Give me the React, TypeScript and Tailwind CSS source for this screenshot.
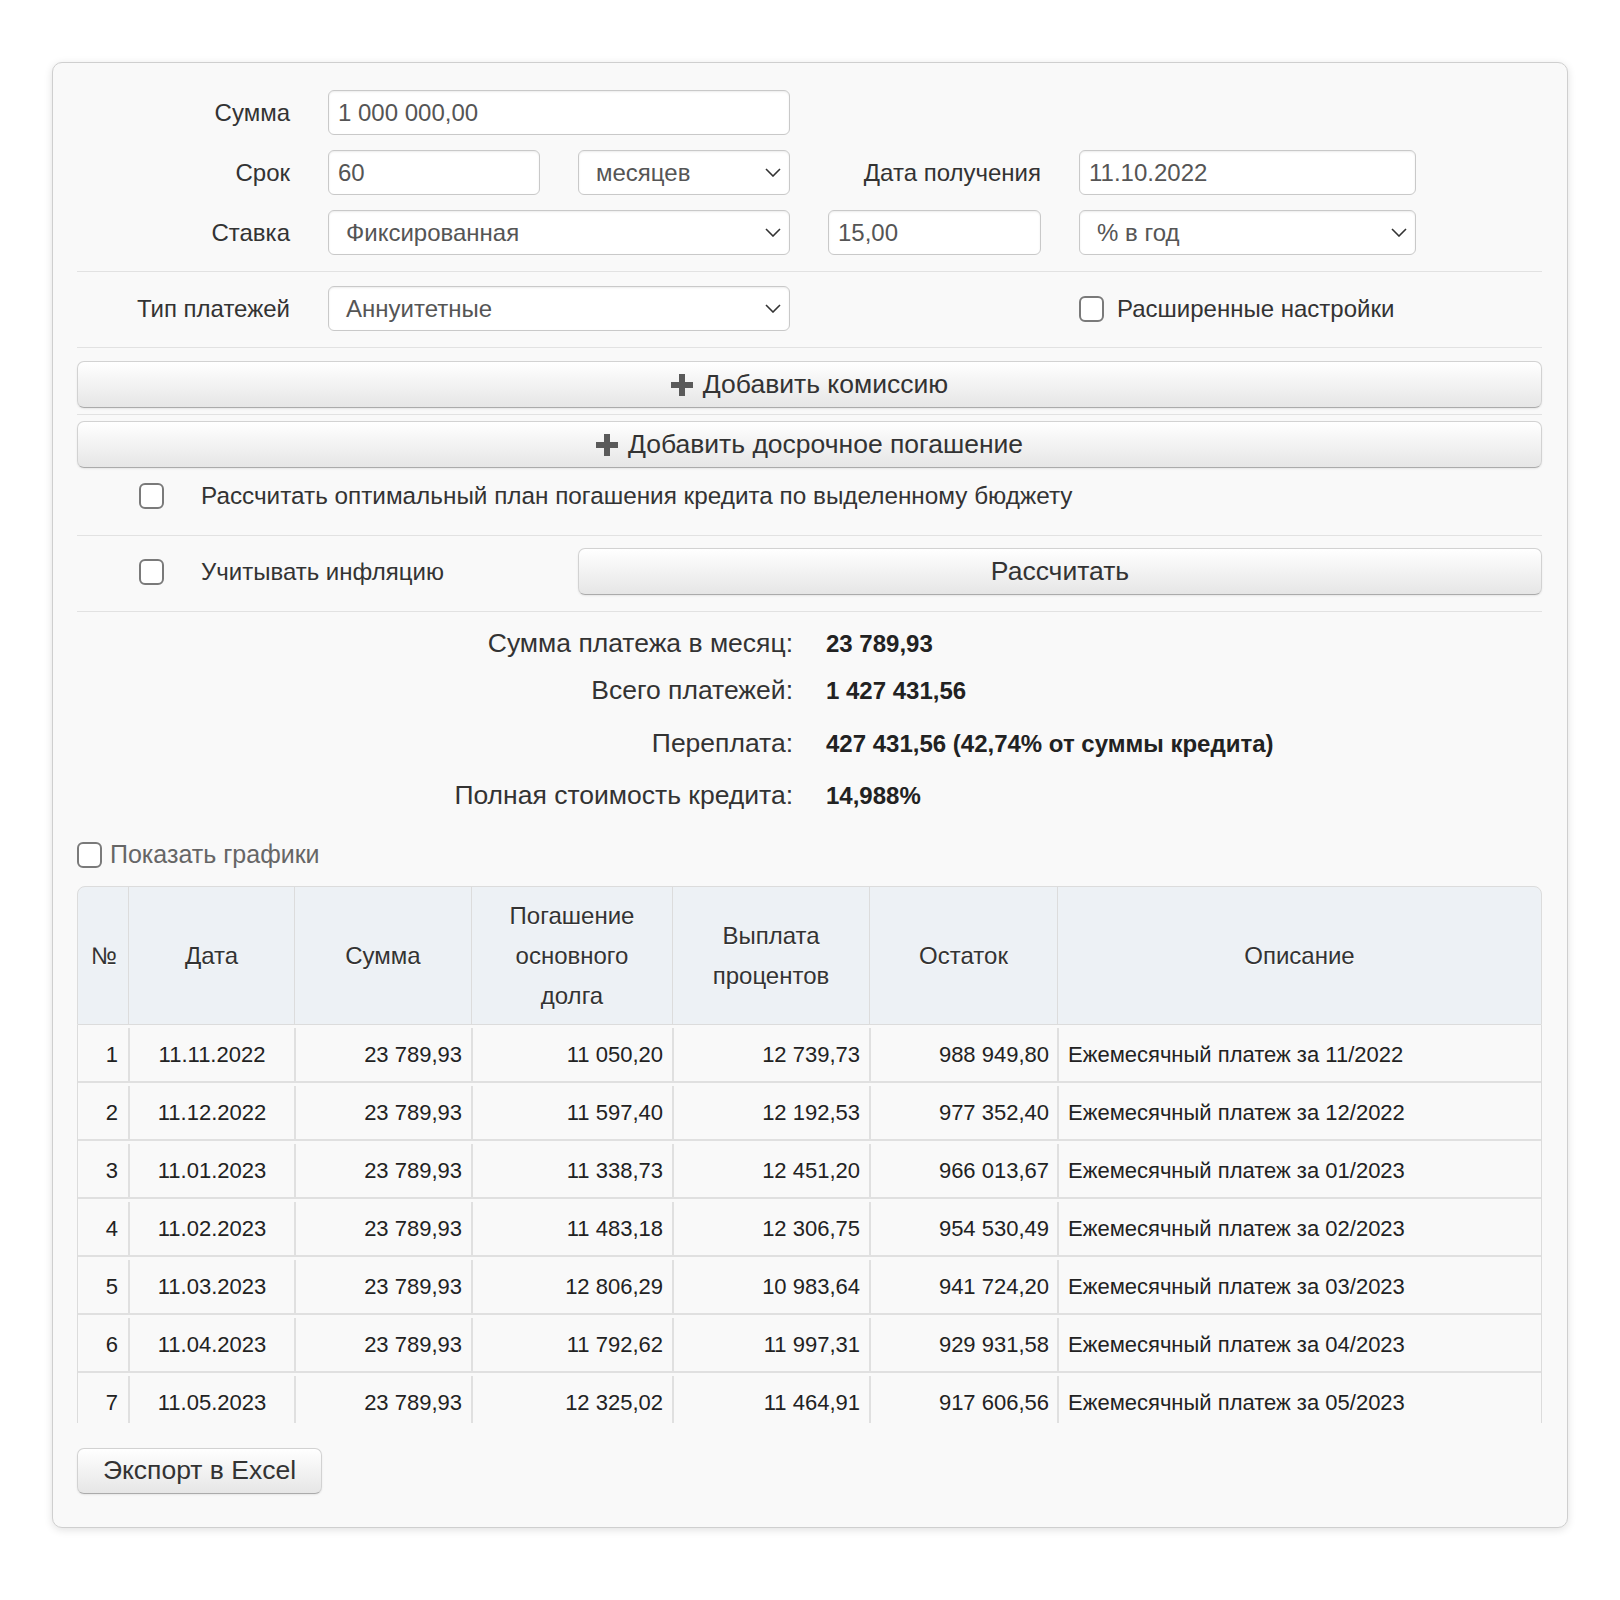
import React from "react";

const rows = [
  ["1", "11.11.2022", "23 789,93", "11 050,20", "12 739,73", "988 949,80", "Ежемесячный платеж за 11/2022"],
  ["2", "11.12.2022", "23 789,93", "11 597,40", "12 192,53", "977 352,40", "Ежемесячный платеж за 12/2022"],
  ["3", "11.01.2023", "23 789,93", "11 338,73", "12 451,20", "966 013,67", "Ежемесячный платеж за 01/2023"],
  ["4", "11.02.2023", "23 789,93", "11 483,18", "12 306,75", "954 530,49", "Ежемесячный платеж за 02/2023"],
  ["5", "11.03.2023", "23 789,93", "12 806,29", "10 983,64", "941 724,20", "Ежемесячный платеж за 03/2023"],
  ["6", "11.04.2023", "23 789,93", "11 792,62", "11 997,31", "929 931,58", "Ежемесячный платеж за 04/2023"],
  ["7", "11.05.2023", "23 789,93", "12 325,02", "11 464,91", "917 606,56", "Ежемесячный платеж за 05/2023"],
];

const cols = "grid grid-cols-[50px_166px_177px_201px_197px_188px_1fr]";

function Chevron() {
  return (
    <svg width="16" height="9" viewBox="0 0 16 9" className="shrink-0">
      <polyline points="1,1 8,8 15,1" fill="none" stroke="#333" strokeWidth="1.6" />
    </svg>
  );
}

function Plus() {
  return (
    <svg width="22" height="22" viewBox="0 0 22 22" className="shrink-0">
      <path d="M8 0h6v8h8v6h-8v8h-6v-8h-8v-6h8z" fill="#5a5a5a" />
    </svg>
  );
}

function Field({ value, className = "" }: { value: string; className?: string }) {
  return (
    <input
      readOnly
      value={value}
      className={`h-[45px] w-full rounded-[6px] border border-[#c9c9c9] bg-white px-[9px] text-[24px] text-[#555] shadow-[inset_0_1px_2px_rgba(0,0,0,0.08)] outline-none ${className}`}
    />
  );
}

function Select({ value, className = "" }: { value: string; className?: string }) {
  return (
    <div
      className={`flex h-[45px] items-center justify-between rounded-[6px] border border-[#c9c9c9] bg-white pl-[17px] pr-[8px] text-[24px] text-[#555] shadow-[inset_0_1px_2px_rgba(0,0,0,0.08)] ${className}`}
    >
      <span>{value}</span>
      <Chevron />
    </div>
  );
}

function Box() {
  return <span className="block h-[26px] w-[25px] shrink-0 rounded-[6px] border-2 border-[#7a7a7a] bg-white" />;
}

function Btn({ children, className = "" }: { children: React.ReactNode; className?: string }) {
  return (
    <div
      className={`flex items-center justify-center gap-[10px] rounded-[7px] border border-[#d2d2d2] border-b-[#ababab] bg-gradient-to-b from-white to-[#e6e6e6] text-[26.5px] text-[#333] shadow-[0_1px_2px_rgba(0,0,0,0.08)] ${className}`}
    >
      {children}
    </div>
  );
}

function Divider({ className = "" }: { className?: string }) {
  return <div className={`h-px bg-[#e2e2e2] ${className}`} />;
}

function Sum({ label, value, className = "" }: { label: string; value: string; className?: string }) {
  return (
    <div className={`grid h-[44px] grid-cols-[716px_1fr] gap-x-[33px] ${className}`}>
      <div className="flex items-center justify-end text-[26.5px]">{label}</div>
      <div className="flex items-center text-[24px] font-bold text-[#222]">{value}</div>
    </div>
  );
}

export default function App() {
  return (
    <div className="min-h-[1600px] bg-white pt-[62px] text-[#333]" style={{ fontFamily: '"Liberation Sans", Arial, sans-serif' }}>
      <div className="ml-[52px] w-[1516px] rounded-[10px] border border-[#cfcfcf] bg-[#f9f9f9] pb-[33px] pl-[24px] pr-[25px] pt-[27px] shadow-[0_2px_8px_rgba(0,0,0,0.12)]">
        {/* основные поля */}
        <div className="grid grid-cols-[213px_212px_212px_213px_337px] gap-x-[38px] gap-y-[15px] text-[24px]">
          <div className="flex h-[45px] items-center justify-end">Сумма</div>
          <Field value="1 000 000,00" className="col-span-2" />
          <div />
          <div />

          <div className="flex h-[45px] items-center justify-end">Срок</div>
          <Field value="60" />
          <Select value="месяцев" />
          <div className="flex h-[45px] items-center justify-end">Дата получения</div>
          <Field value="11.10.2022" />

          <div className="flex h-[45px] items-center justify-end">Ставка</div>
          <Select value="Фиксированная" className="col-span-2" />
          <Field value="15,00" />
          <Select value="% в год" />
        </div>

        <Divider className="mt-[16px]" />

        <div className="mt-[14px] grid grid-cols-[213px_212px_212px_213px_337px] gap-x-[38px] text-[24px]">
          <div className="flex h-[45px] items-center justify-end">Тип платежей</div>
          <Select value="Аннуитетные" className="col-span-2" />
          <div />
          <div className="flex h-[45px] items-center gap-[13px]">
            <Box />
            <span>Расширенные настройки</span>
          </div>
        </div>

        <Divider className="mt-[16px]" />

        <Btn className="mt-[13px] h-[47px]">
          <Plus />
          <span>Добавить комиссию</span>
        </Btn>
        <Divider className="mt-[6px]" />
        <Btn className="mt-[6px] h-[47px]">
          <Plus />
          <span>Добавить досрочное погашение</span>
        </Btn>

        <div className="mt-[15px] flex h-[26px] items-center pl-[62px] text-[24.3px]">
          <Box />
          <span className="ml-[37px]">Рассчитать оптимальный план погашения кредита по выделенному бюджету</span>
        </div>

        <Divider className="mt-[26px]" />

        <div className="mt-[12px] flex items-center text-[24px]">
          <div className="flex w-[501px] items-center pl-[62px]">
            <Box />
            <span className="ml-[37px]">Учитывать инфляцию</span>
          </div>
          <Btn className="h-[47px] flex-1">Рассчитать</Btn>
        </div>

        <Divider className="mt-[16px]" />

        {/* итоги */}
        <Sum label="Сумма платежа в месяц:" value="23 789,93" className="mt-[10px]" />
        <Sum label="Всего платежей:" value="1 427 431,56" className="mt-[3px]" />
        <Sum label="Переплата:" value="427 431,56 (42,74% от суммы кредита)" className="mt-[9px]" />
        <Sum label="Полная стоимость кредита:" value="14,988%" className="mt-[8px]" />

        <div className="mt-[24px] flex h-[25px] items-center gap-[8px] text-[25px] text-[#666]">
          <Box />
          <span>Показать графики</span>
        </div>

        {/* таблица */}
        <div className="mt-[19px]">
          <div className={`${cols} h-[139px] rounded-t-[8px] border border-[#dcdcdc] bg-[#edf1f5] text-[24px] text-[#333] [text-shadow:0_1px_0_#fff]`}>
            <div className="flex items-center pl-[13px]">№</div>
            <div className="flex items-center justify-center border-l border-[#dcdcdc]">Дата</div>
            <div className="flex items-center justify-center border-l border-[#dcdcdc]">Сумма</div>
            <div className="flex items-center justify-center border-l border-[#dcdcdc] text-center leading-[40px]">
              Погашение
              <br />
              основного
              <br />
              долга
            </div>
            <div className="flex items-center justify-center border-l border-[#dcdcdc] text-center leading-[40px]">
              Выплата
              <br />
              процентов
            </div>
            <div className="flex items-center justify-center border-l border-[#dcdcdc]">Остаток</div>
            <div className="flex items-center justify-center border-l border-[#dcdcdc]">Описание</div>
          </div>
          <div className="h-[398px] overflow-hidden border-x border-[#dcdcdc] text-[22px] text-[#222]">
            {rows.map((r) => (
              <div key={r[0]} className={`${cols} h-[58px] border-b-2 border-[#e0e0e0] pt-[3px]`}>
                <div className="flex items-center justify-end pr-[10px]">{r[0]}</div>
                <div className="flex items-center justify-center border-l-2 border-[#e0e0e0]">{r[1]}</div>
                <div className="flex items-center justify-end border-l-2 border-[#e0e0e0] pr-[9px]">{r[2]}</div>
                <div className="flex items-center justify-end border-l-2 border-[#e0e0e0] pr-[9px]">{r[3]}</div>
                <div className="flex items-center justify-end border-l-2 border-[#e0e0e0] pr-[9px]">{r[4]}</div>
                <div className="flex items-center justify-end border-l-2 border-[#e0e0e0] pr-[8px]">{r[5]}</div>
                <div className="flex items-center border-l-2 border-[#e0e0e0] pl-[9px]">{r[6]}</div>
              </div>
            ))}
          </div>
        </div>

        <Btn className="mt-[25px] h-[46px] w-[245px]">Экспорт в Excel</Btn>
      </div>
    </div>
  );
}
